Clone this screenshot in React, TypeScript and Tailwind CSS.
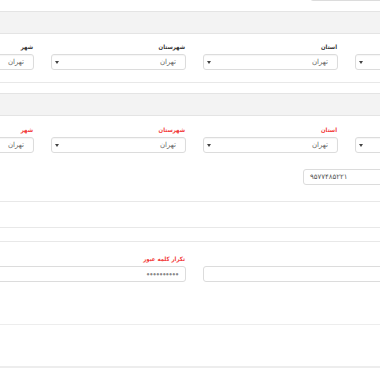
import React from "react";

const font = { fontFamily: '"DejaVu Sans", sans-serif' };
const labelFont = { fontFamily: '"DejaVu Sans Condensed", "DejaVu Sans", sans-serif' };

function Arrow() {
  return (
    <svg width="4" height="3" viewBox="0 0 4 3" className="shrink-0">
      <path d="M0 0 L4 0 L2 3 Z" fill="#444" />
    </svg>
  );
}

function SelectBox({ value }: { value: string }) {
  return (
    <div className="flex h-[16px] w-full items-center justify-between rounded-[3px] border border-[#dcdcdc] bg-white pl-[3px] pr-[9px] shadow-[inset_0_1px_1px_rgba(0,0,0,0.04)]">
      <span className="text-[7px] leading-none text-[#666]">{value}</span>
      <Arrow />
    </div>
  );
}

function Field({ label, red, value }: { label: string; red?: boolean; value: string }) {
  return (
    <div className="flex w-[135px] shrink-0 flex-col">
      <span
        style={labelFont}
        className={
          "h-[10px] pr-[1px] text-[6px] font-bold leading-[10px] " + (red ? "text-[#f23a3a]" : "text-[#333]")
        }
      >
        {label}
      </span>
      <div className="mt-[2px]">
        <SelectBox value={value} />
      </div>
    </div>
  );
}

function Band() {
  return <div className="h-[23px] w-full border-y border-[#e4e4e4] bg-[#f3f3f3]" />;
}

export default function App() {
  return (
    <div className="h-[380px] w-[380px] overflow-hidden bg-white" style={font}>
      {/* tail of the input above */}
      <div className="flex h-[11px] justify-end">
        <div className="-mr-[20px] -mt-[15px] h-[16px] w-[90px] rounded-[3px] border border-[#dcdcdc]" />
      </div>

      <Band />

      <div className="border-b border-[#e8e8e8] pb-[12px] pt-[8px]">
        <div dir="rtl" className="-ml-[101px] flex w-[591px] gap-[17px]">
          <Field label="" value="" />
          <Field label="استان" value="تهران" />
          <Field label="شهرستان" value="تهران" />
          <Field label="شهر" value="تهران" />
        </div>
      </div>

      <div className="h-[10px]" />
      <Band />

      <div className="border-b border-[#e8e8e8] pb-[16px] pt-[9px]">
        <div dir="rtl" className="-ml-[101px] flex w-[591px] gap-[17px]">
          <Field label="" red value="" />
          <Field label="استان" red value="تهران" />
          <Field label="شهرستان" red value="تهران" />
          <Field label="شهر" red value="تهران" />
        </div>
        <div className="mt-[16px] flex justify-end">
          <div className="-mr-[110px] flex h-[16px] w-[187px] items-center rounded-[3px] border border-[#dcdcdc] pl-[6px]">
            <span className="text-[7px] leading-none tracking-[0.4px] text-[#555]">۹۵۷۷۴۸۵۲۲۱</span>
          </div>
        </div>
      </div>

      <div className="h-[26px] border-b border-[#e8e8e8]" />
      <div className="h-[14px] border-b border-[#e8e8e8]" />

      <div className="border-b border-[#ededed] pb-[42px] pt-[12px]">
        <div dir="rtl" className="-ml-[101px] flex w-[591px] gap-[17px]">
          <div className="flex w-[287px] shrink-0 flex-col justify-end">
            <div className="h-[16px] w-full rounded-[3px] border border-[#dcdcdc] bg-white" />
          </div>
          <div className="flex w-[287px] shrink-0 flex-col">
            <span
              style={labelFont}
              className="h-[10px] pr-[1px] text-[6px] font-bold leading-[10px] text-[#f23a3a]"
            >
              تکرار کلمه عبور
            </span>
            <div className="mt-[2px] flex h-[16px] w-full items-center rounded-[3px] border border-[#dcdcdc] bg-white pr-[6px]">
              <span className="text-[3px] leading-none tracking-[0.6px] text-[#888]">●●●●●●●●●●</span>
            </div>
          </div>
        </div>
      </div>

      <div className="h-[43px] border-b-2 border-[#ededed]" />
    </div>
  );
}
